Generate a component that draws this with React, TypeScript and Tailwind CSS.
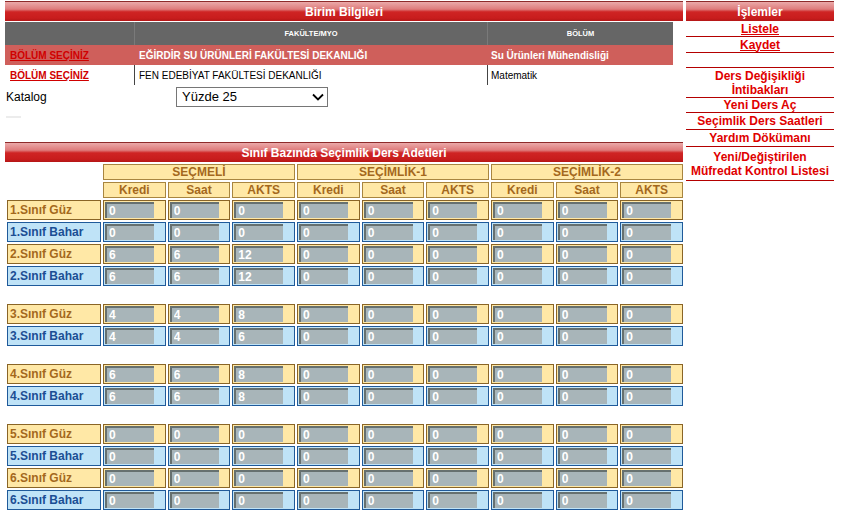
import React from 'react';

const barClass =
  'h-[20px] border-t border-[#8e2a2a] bg-[linear-gradient(to_bottom,#eba9a9_0%,#de7b7b_38%,#cf2424_52%,#c81d1d_85%,#b41616_100%)] flex items-center justify-center text-white font-bold';

const RedBar = ({ title, size = 'text-[12px]' }: { title: string; size?: string }) => (
  <div className={`${barClass} ${size}`}>{title}</div>
);

type Row = { label: string; season: 'guz' | 'bahar'; values: number[] } | 'gap';

const z = [0, 0, 0, 0, 0, 0];

const rows: Row[] = [
  { label: '1.Sınıf Güz', season: 'guz', values: [0, 0, 0, ...z] },
  { label: '1.Sınıf Bahar', season: 'bahar', values: [0, 0, 0, ...z] },
  { label: '2.Sınıf Güz', season: 'guz', values: [6, 6, 12, ...z] },
  { label: '2.Sınıf Bahar', season: 'bahar', values: [6, 6, 12, ...z] },
  'gap',
  { label: '3.Sınıf Güz', season: 'guz', values: [4, 4, 8, ...z] },
  { label: '3.Sınıf Bahar', season: 'bahar', values: [4, 4, 6, ...z] },
  'gap',
  { label: '4.Sınıf Güz', season: 'guz', values: [6, 6, 8, ...z] },
  { label: '4.Sınıf Bahar', season: 'bahar', values: [6, 6, 8, ...z] },
  'gap',
  { label: '5.Sınıf Güz', season: 'guz', values: [0, 0, 0, ...z] },
  { label: '5.Sınıf Bahar', season: 'bahar', values: [0, 0, 0, ...z] },
  { label: '6.Sınıf Güz', season: 'guz', values: [0, 0, 0, ...z] },
  { label: '6.Sınıf Bahar', season: 'bahar', values: [0, 0, 0, ...z] },
];

const groups = ['SEÇMELİ', 'SEÇİMLİK-1', 'SEÇİMLİK-2'];
const subs = ['Kredi', 'Saat', 'AKTS'];

const headCell =
  'h-[16px] border border-[#a8853f] bg-[#ffe8a6] text-[#a4681d] font-bold text-[12px] leading-[14px] flex items-center justify-center';

const App = () => {
  return (
    <div className="min-h-[523px] bg-white pl-[5px] pt-[1px] font-['Liberation_Sans',Arial,sans-serif] flex gap-[3px]">
      {/* left column */}
      <div className="w-[678px]">
        <RedBar title="Birim Bilgileri" />

        <div className="mt-[1px] w-[668px]">
          <div className="flex h-[23px] bg-[#666666] text-white font-bold text-[7.5px]">
            <div className="w-[129px]" />
            <div className="w-[353px] border-l border-[#7a7a7a] flex items-center justify-center">FAKÜLTE/MYO</div>
            <div className="flex-1 border-l border-[#7a7a7a] flex items-center justify-center">BÖLÜM</div>
          </div>
          <div className="flex h-[20px] bg-[#cf5f5b] text-[10px] font-bold items-center">
            <div className="w-[129px] pl-[5px]">
              <a href="#" className="text-[#d00000] underline">BÖLÜM SEÇİNİZ</a>
            </div>
            <div className="w-[353px] pl-[5px] text-white">EĞİRDİR SU ÜRÜNLERİ FAKÜLTESİ DEKANLIĞI</div>
            <div className="flex-1 pl-[4px] text-white">Su Ürünleri Mühendisliği</div>
          </div>
          <div className="flex h-[20px] text-[10px] text-black">
            <div className="w-[129px] pl-[5px] flex items-center">
              <a href="#" className="text-[#d00000] font-bold underline">BÖLÜM SEÇİNİZ</a>
            </div>
            <div className="w-[353px] pl-[4px] border-l border-[#444] flex items-center">FEN EDEBİYAT FAKÜLTESİ DEKANLIĞI</div>
            <div className="flex-1 pl-[3px] border-l border-[#444] flex items-center">Matematik</div>
          </div>
        </div>

        <div className="mt-[2px] flex h-[20px] items-center">
          <div className="w-[171px] pl-[1px] text-[12px] text-black">Katalog</div>
          <div className="relative w-[152px] h-[20px]">
            <select
              defaultValue="25"
              className="block appearance-none w-full h-[20px] border border-[#767676] bg-white pl-[5px] py-0 text-[13px] leading-[18px] text-black outline-none"
            >
              <option value="25">Yüzde 25</option>
              <option value="50">Yüzde 50</option>
            </select>
            <svg className="pointer-events-none absolute right-[4px] top-[6px]" width="12" height="8" viewBox="0 0 12 8">
              <path d="M1 1.5 L6 6.5 L11 1.5" fill="none" stroke="#000" strokeWidth="1.8" />
            </svg>
          </div>
        </div>

        <div className="mt-[9px] ml-[1px] w-[15px] h-[2px] bg-[#ececec]" />

        <div className="mt-[24px]">
          <RedBar title="Sınıf Bazında Seçimlik Ders Adetleri" />
        </div>

        <div className="mt-[2px] ml-[2px] grid w-[676px] grid-cols-[94px_repeat(9,minmax(0,1fr))] gap-[2px]">
          <div className="row-span-2" />
          {groups.map((g) => (
            <div key={g} className={`col-span-3 ${headCell}`}>{g}</div>
          ))}
          {groups.map((g) =>
            subs.map((s) => (
              <div key={g + s} className={headCell}>{s}</div>
            ))
          )}
          {rows.map((r, i) => {
            if (r === 'gap') return <div key={'gap' + i} className="col-span-10 h-[14px]" />;
            const guz = r.season === 'guz';
            const cell = guz ? 'border-[#8a6526] bg-[#ffe8a6]' : 'border-[#1f5a9a] bg-[#bfe3f7]';
            return (
              <React.Fragment key={r.label}>
                <div
                  className={`h-[20px] border ${cell} pl-[2px] flex items-center font-bold text-[12px] ${
                    guz ? 'text-[#a4681d]' : 'text-[#1b4e94]'
                  }`}
                >
                  {r.label}
                </div>
                {r.values.map((v, j) => (
                  <div key={j} className={`h-[20px] border ${cell} px-[1px] py-[1px] flex`}>
                    <input
                      readOnly
                      value={v}
                      className="w-[49px] h-full bg-[#a8b5b9] border-t-2 border-l-2 border-[#66706f] pl-[2px] text-white font-bold text-[12px] leading-[14px] outline-none"
                    />
                  </div>
                ))}
              </React.Fragment>
            );
          })}
        </div>
      </div>

      {/* right column */}
      <div className="w-[148px] text-[12px] font-bold text-[#e00000] text-center leading-[14px]">
        <RedBar title="İşlemler" />
        <div className="h-[16px] border-b border-[#b40000] flex items-center justify-center">
          <a href="#" className="underline">Listele</a>
        </div>
        <div className="h-[16px] border-b border-[#b40000] flex items-center justify-center">
          <a href="#" className="underline">Kaydet</a>
        </div>
        <div className="h-[15px] border-b border-[#b40000]" />
        <div className="h-[30px] border-b border-[#b40000] flex items-center justify-center">
          <a href="#">Ders Değişikliği<br />İntibakları</a>
        </div>
        <div className="h-[15px] border-b border-[#b40000] flex items-center justify-center">
          <a href="#">Yeni Ders Aç</a>
        </div>
        <div className="h-[17px] border-b border-[#b40000] flex items-center justify-center">
          <a href="#">Seçimlik Ders Saatleri</a>
        </div>
        <div className="h-[17px] border-b border-[#b40000] flex items-center justify-center">
          <a href="#">Yardım Dökümanı</a>
        </div>
        <div className="h-[34px] border-b border-[#b40000] flex items-center justify-center">
          <a href="#">Yeni/Değiştirilen<br />Müfredat Kontrol Listesi</a>
        </div>
      </div>
    </div>
  );
};

export default App;
